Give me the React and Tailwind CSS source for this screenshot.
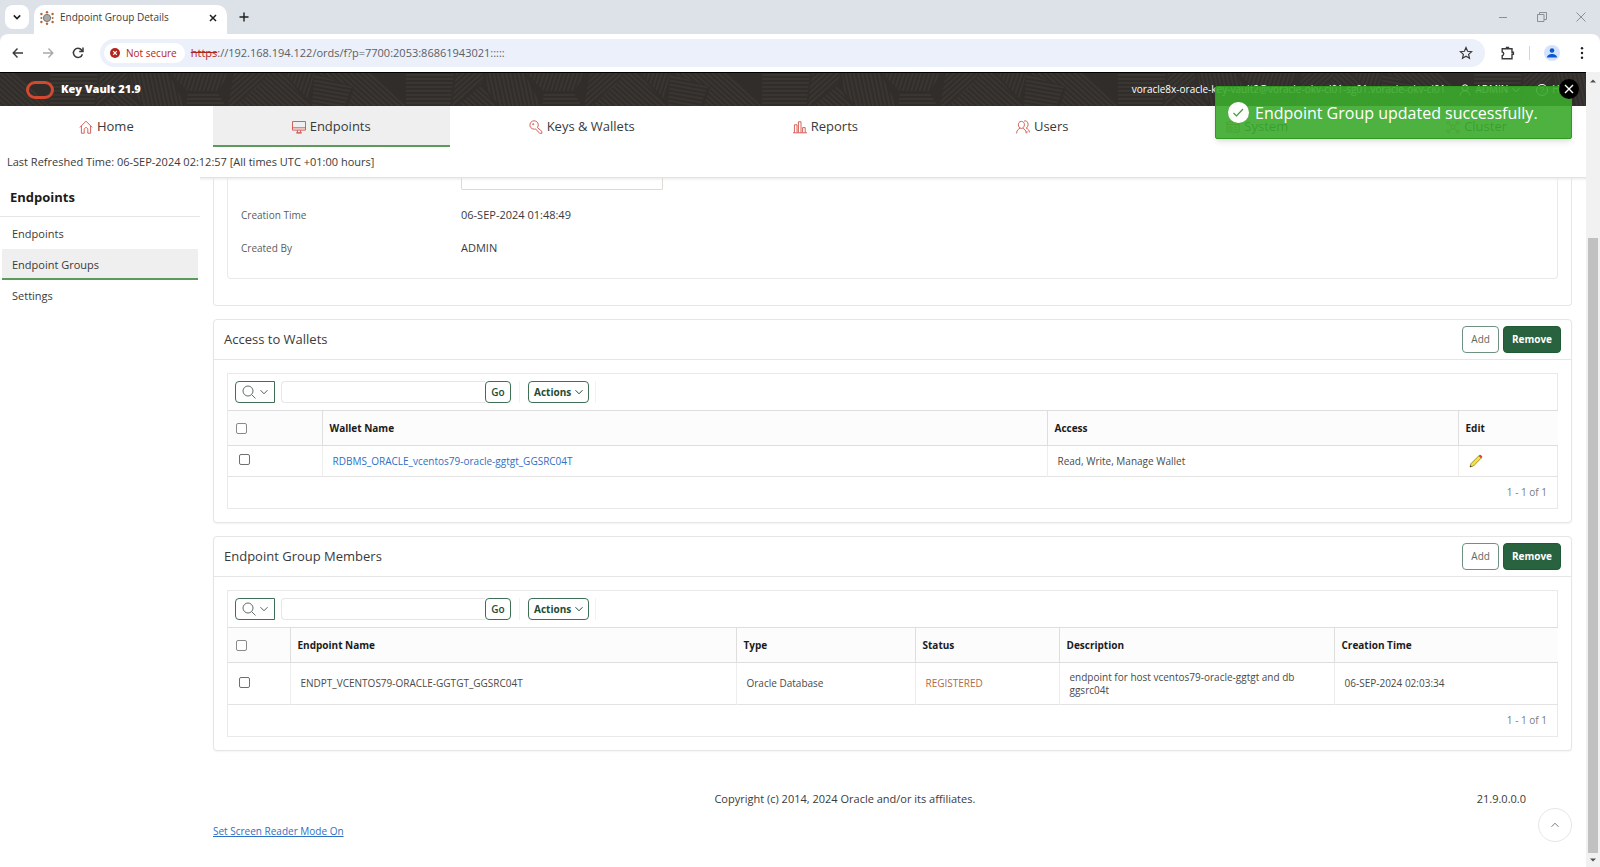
import React, { useState } from "react";

const navItems = [
  { label: "Home", icon: "home" },
  { label: "Endpoints", icon: "monitor" },
  { label: "Keys & Wallets", icon: "key" },
  { label: "Reports", icon: "chart" },
  { label: "Users", icon: "users" },
  { label: "System", icon: "system" },
  { label: "Cluster", icon: "cluster" },
];

const sideItems = ["Endpoints", "Endpoint Groups", "Settings"];

const walletColumns = [
  { label: "Wallet Name", width: "w-[725px]" },
  { label: "Access", width: "w-[411px]" },
  { label: "Edit", width: "w-[100px]" },
];

const memberColumns = [
  { label: "Endpoint Name", width: "w-[446px]" },
  { label: "Type", width: "w-[179px]" },
  { label: "Status", width: "w-[144px]" },
  { label: "Description", width: "w-[275px]" },
  { label: "Creation Time", width: "w-[224px]" },
];

const iconPaths = {
  home: (
    <path d="M.8 7.4 7 1.2l6.2 6.2M2.4 6v7.2h2.8V9.4c0-2.4 3.6-2.4 3.6 0v3.8h2.8V6" />
  ),
  monitor: (
    <path d="M.5 1.5h13v8.6H.5zM.5 7.8h13M5.4 10.1v2.8h3.2v-2.8M4 12.9h6" />
  ),
  key: (
    <>
      <path d="M8.4 7.6A4.2 4.2 0 1 0 5 9.2c.8 0 1.6-.3 1.6-.3l4 4.4h2.200v-2L8.4 7.6z" />
      <circle cx="4.2" cy="4.2" r=".6" />
    </>
  ),
  chart: (
    <path d="M0 12.8h14M1.4 12.6V4.8h2.6v7.8M5.4 12.6V1.8H8v10.8M9.6 12.6V7.6h2.6v5" />
  ),
  users: (
    <path d="M5.4 1.4c4.4 0 3.6 7 0 7s-4.400-7 0-7zM.6 13.400c0-3.400 2-4.400 3.600-5.400M10.200 13.400c0-3.400-2-4.400-3.600-5.400M8 1.200c4.600-1.800 5.200 5.400 2.200 7 2.200 1 3.200 2.200 3.200 4.200M11 11.200v1.600" />
  ),
  system: (
    <path d="M1 2h12v10H1zM1 4.500h12M3 7h3v3H3zM8 7h3M8 9.500h3" />
  ),
  cluster: (
    <>
      <circle cx="7" cy="7" r="2" />
      <circle cx="2.300" cy="2.800" r="1.500" />
      <circle cx="11.700" cy="2.800" r="1.500" />
      <circle cx="2.300" cy="11.400" r="1.500" />
      <circle cx="11.700" cy="11.400" r="1.500" />
      <path d="m3.500 3.800 2 1.800M10.500 3.800l-2 1.800M3.500 10.400l2-1.800M10.500 10.400l-2-1.800" />
    </>
  ),
};

const NavIcon = ({ name }) => (
  <svg
    className="size-3.5 shrink-0"
    viewBox="0 0 14 14"
    fill="none"
    stroke="#cf5148"
    strokeWidth=".9"
    strokeLinejoin="round"
  >
    {iconPaths[name]}
  </svg>
);

const Chevron = ({ className = "size-2" }) => (
  <svg className={className} viewBox="0 0 8 8" fill="none" stroke="currentColor" strokeWidth="1">
    <path d="M.5 2.200 4 5.800l3.500-3.600" />
  </svg>
);

// Hatched bands of the dark header, repeated over its whole width
const HeaderPattern = () => {
  const hatches = [
    { id: "h-steep", angle: -12 },
    { id: "h-lean", angle: 18 },
    { id: "h-diag", angle: 48 },
    { id: "h-back", angle: -48 },
    { id: "h-flat", angle: 90 },
    { id: "h-tilt", angle: -80 },
  ];
  const bands = [
    { fill: "url(#h-steep)", points: "0,0 24,0 42,34 0,34" },
    { fill: "url(#h-lean)", points: "26,0 86,0 74,18 44,18" },
    { fill: "url(#h-flat)", points: "44,20 74,20 82,34 42,34" },
    { fill: "url(#h-diag)", points: "90,0 122,0 116,12 88,34 84,34" },
    { fill: "url(#h-back)", points: "124,0 138,0 168,34 90,34 116,12" },
    { fill: "url(#h-lean)", points: "140,0 170,0 164,26" },
    { fill: "url(#h-tilt)", points: "170,0 208,14 200,34 168,34" },
    { fill: "url(#h-back)", points: "172,0 228,0 262,34 204,34 210,14" },
    { fill: "url(#h-flat)", points: "262,0 310,0 306,34 262,34" },
    { fill: "url(#h-diag)", points: "312,0 340,0 338,10 308,34" },
    { fill: "url(#h-back)", points: "338,12 352,34 312,34" },
    { fill: "url(#h-steep)", points: "342,0 356,0 356,34 344,18" },
  ];
  return (
    <svg className="absolute inset-0 h-full w-full" aria-hidden="true">
      <defs>
        {hatches.map((h) => (
          <pattern
            key={h.id}
            id={h.id}
            width="4"
            height="4"
            patternUnits="userSpaceOnUse"
            patternTransform={`rotate(${h.angle})`}
          >
            <path d="M2 0v4" stroke="#423d39" strokeWidth="1" />
          </pattern>
        ))}
        <pattern id="bands" width="356" height="34" x="144" patternUnits="userSpaceOnUse">
          {bands.map((b, i) => (
            <polygon key={i} points={b.points} fill={b.fill} />
          ))}
        </pattern>
      </defs>
      <rect width="100%" height="100%" fill="url(#bands)" />
    </svg>
  );
};

const BrowserTabs = () => (
  <div className="flex h-[34px] items-end bg-[#dde1e8] text-[#1f1f1f]">
    <button
      aria-label="Search tabs"
      className="mb-[5px] ml-[5px] flex size-6 items-center justify-center rounded-lg bg-white"
    >
      <svg className="size-2" viewBox="0 0 8 8" fill="none" stroke="currentColor" strokeWidth="1.600">
        <path d="M.8 2.400 4 5.600l3.200-3.200" />
      </svg>
    </button>
    <div className="ml-[5px] flex h-[29px] w-[193px] items-center rounded-t-[10px] bg-white pr-1.5 pb-1 pl-1.5">
      <svg className="size-3.5" viewBox="0 0 14 14">
        <circle cx="7" cy="7" r="3.600" fill="#a9a9a9" stroke="#777" />
        <g fill="#b5642f">
          <circle cx="7" cy="1.200" r="1.200" />
          <circle cx="7" cy="12.800" r="1.200" />
          <circle cx="1.400" cy="3" r="1.200" />
          <circle cx="12.600" cy="3" r="1.200" />
          <circle cx="1.400" cy="7" r="1" />
          <circle cx="12.600" cy="7" r="1" />
          <circle cx="1.400" cy="11" r="1.200" />
          <circle cx="12.600" cy="11" r="1.200" />
        </g>
      </svg>
      <span className="ml-1.5 flex-1 text-[10px] text-[#3c3c3c]">Endpoint Group Details</span>
      <button aria-label="Close tab" className="p-1">
        <svg className="size-2" viewBox="0 0 8 8" stroke="currentColor" strokeWidth="1.500">
          <path d="m1 1 6 6M7 1 1 7" />
        </svg>
      </button>
    </div>
    <button aria-label="New tab" className="mb-3 ml-3">
      <svg className="size-2.5" viewBox="0 0 10 10" stroke="currentColor" strokeWidth="1.400">
        <path d="M5 .5v9M.5 5h9" />
      </svg>
    </button>
    <div className="mr-3.5 mb-3 ml-auto flex items-center gap-[29px] text-[#8b8e92]">
      <button aria-label="Minimize">
        <svg className="size-2.5" viewBox="0 0 10 10" stroke="currentColor">
          <path d="M1 5.500h8" />
        </svg>
      </button>
      <button aria-label="Restore">
        <svg className="size-2.5" viewBox="0 0 10 10" fill="none" stroke="currentColor">
          <path d="M.5 2.500h6.500v7H.5zM2.500 2.500v-2h7v7H7" />
        </svg>
      </button>
      <button aria-label="Close">
        <svg className="size-2.5" viewBox="0 0 10 10" stroke="currentColor">
          <path d="m.5.5 9 9M9.500.5l-9 9" />
        </svg>
      </button>
    </div>
  </div>
);

const AddressBar = () => (
  <div className="bg-[#dde1e8]">
    <div className="flex h-[38px] items-center rounded-t-lg bg-white pr-4 pl-3 text-[#3a3a3a]">
      <button aria-label="Back">
        <svg className="size-3" viewBox="0 0 12 12" fill="none" stroke="currentColor" strokeWidth="1.400">
          <path d="M11 6H1.500M5.500 1.500 1.200 6l4.300 4.500" />
        </svg>
      </button>
      <button aria-label="Forward" className="ml-[18px] text-[#a9a9a9]">
        <svg className="size-3" viewBox="0 0 12 12" fill="none" stroke="currentColor" strokeWidth="1.400">
          <path d="M1 6h9.500M6.500 1.500 10.800 6l-4.300 4.500" />
        </svg>
      </button>
      <button aria-label="Reload" className="ml-[18px]">
        <svg className="size-3" viewBox="0 0 12 12" fill="none" stroke="currentColor" strokeWidth="1.500">
          <path d="M10.400 7.200A4.600 4.600 0 1 1 9.600 3L11 4.400M11 .6v3.800H7.200" />
        </svg>
      </button>
      <div className="ml-4 flex h-7 flex-1 items-center rounded-full bg-[#ebf0fa] pr-3 pl-1">
        <button className="flex h-5 items-center gap-1.5 rounded-full bg-white pr-2 pl-1.5 text-[10px] text-[#b3261e]">
          <svg className="size-2.5" viewBox="0 0 10 10">
            <circle cx="5" cy="5" r="5" fill="#b3261e" />
            <path d="m3.200 3.200 3.600 3.600M6.800 3.200 3.200 6.800" stroke="#fff" strokeWidth="1.200" />
          </svg>
          Not secure
        </button>
        <p className="ml-1.5 flex-1 text-[11px] text-[#5b5f66]">
          <span className="text-[#b3261e] line-through">https</span>
          ://192.168.194.122/ords/f?p=7700:2053:86861943021:::::
        </p>
        <button aria-label="Bookmark">
          <svg className="size-3.5" viewBox="0 0 14 14" fill="none" stroke="currentColor" strokeWidth="1.200">
            <path d="m7 1.600 1.600 3.700 4 .4-3 2.700.9 3.900L7 10.200l-3.500 2.100.9-3.900-3-2.700 4-.4z" />
          </svg>
        </button>
      </div>
      <button aria-label="Extensions" className="ml-4">
        <svg className="size-3.5" viewBox="0 0 14 14" fill="none" stroke="currentColor" strokeWidth="1.400">
          <path d="M1.200 2.800H11v3.500h1.400v2H11v4.500H1.200V9.600c2-.4 2-3.200 0-3.600z" />
          <path d="M5.500 2V1.400h2V2" />
        </svg>
      </button>
      <span className="mx-3.5 h-3.5 w-px bg-[#c3d7f7]" />
      <button aria-label="Profile" className="flex size-4 items-center justify-center rounded-full bg-[#d3e3fd]">
        <svg className="size-2.5" viewBox="0 0 10 10" fill="#0b57d0">
          <circle cx="5" cy="2.500" r="2.300" />
          <path d="M0 9.500C0 4.800 10 4.800 10 9.500z" />
        </svg>
      </button>
      <button aria-label="Menu" className="ml-5">
        <svg className="h-3 w-1" viewBox="0 0 4 12" fill="#1f1f1f">
          <circle cx="2" cy="1.300" r="1.200" />
          <circle cx="2" cy="6" r="1.200" />
          <circle cx="2" cy="10.700" r="1.200" />
        </svg>
      </button>
    </div>
  </div>
);

const Region = ({ title, children }) => (
  <section className="mb-[13px] rounded-sm border border-[#e6e6e6] bg-white shadow-xs">
    <div className="flex h-10 items-center gap-1 border-b border-[#e6e6e6] px-2.5">
      <h2 className="flex-1 text-[13px] text-[#3a3a3a]">{title}</h2>
      <button className="h-[27px] rounded-sm border border-[#6f9180] bg-white px-2 text-[10px] text-[#5b6a62]">
        Add
      </button>
      <button className="h-[27px] rounded-sm border border-[#1f5a37] bg-[#28623f] px-2 text-[10px] font-bold text-white">
        Remove
      </button>
    </div>
    <div className="m-[13px] border border-[#e9e9e9]">{children}</div>
  </section>
);

const ReportToolbar = ({ name }) => (
  <div className="flex h-9 items-center pl-[7px]">
    <button
      aria-label="Select columns to search"
      className="flex h-[22px] w-10 items-center justify-center gap-1 rounded-l-sm border border-[#3f6f54] text-[#4d5f55]"
    >
      <svg className="size-3.5" viewBox="0 0 14 14" fill="none" stroke="currentColor" strokeWidth=".9">
        <circle cx="6" cy="6" r="5" />
        <path d="m9.800 9.800 3.700 3.700" />
      </svg>
      <Chevron />
    </button>
    <input
      type="text"
      aria-label={`Search ${name}`}
      className="ml-1.5 h-[22px] w-[204px] rounded-l-sm border border-r-0 border-[#e6e6e6] px-2 text-[11px] outline-none"
    />
    <button className="h-[22px] w-[26px] rounded-sm border border-[#3f6f54] text-[10px] font-semibold text-[#1e4d33]">
      Go
    </button>
    <span className="mx-2 h-[22px] w-px bg-[#f2f2f2]" />
    <button className="flex h-[22px] items-center gap-1 rounded-sm border border-[#3f6f54] px-[5px] text-[10px] font-bold text-[#1e4d33]">
      Actions <Chevron />
    </button>
    <span className="ml-1.5 h-[22px] w-px bg-[#f2f2f2]" />
  </div>
);

const Report = ({ name, columns, checkWidth, children }) => (
  <>
    <ReportToolbar name={name} />
    <table className="w-full table-fixed border-collapse text-left">
      <thead>
        <tr className="h-[35px] border-y border-[#dedede] bg-[#fcfcfc]">
          <th className={`${checkWidth} pl-2`}>
            <input
              type="checkbox"
              aria-label={`Select all ${name}`}
              className="block size-[11px] appearance-none rounded-xs border border-[#8a8a8a] bg-white"
            />
          </th>
          {columns.map((col) => (
            <th
              key={col.label}
              className={`${col.width} border-l border-[#dedede] pl-[7px] text-[10px] font-bold text-[#1b1b1b]`}
            >
              {col.label}
            </th>
          ))}
        </tr>
      </thead>
      <tbody>{children}</tbody>
    </table>
    <div className="flex h-[31px] items-center justify-end pr-2.5 text-[10px] text-[#7a7a7a]">1 - 1 of 1</div>
  </>
);

const RowCheck = ({ label }) => (
  <td className="pb-[3px] pl-[11px]">
    <input
      type="checkbox"
      aria-label={label}
      className="block size-[11px] appearance-none rounded-xs border border-[#6f6f6f] bg-white"
    />
  </td>
);

const Cell = ({ className = "text-[#4a4a4a]", children }) => (
  <td className={`border-l border-[#ededed] px-2.5 text-[10px] ${className}`}>{children}</td>
);

const Toast = ({ onClose }) => (
  <div
    role="alert"
    className="absolute top-3.5 right-3.5 flex h-[53px] w-[357px] items-center rounded-xs border border-[#2f9a20] bg-[#3baa2c]/90 pl-3 text-white shadow-md"
  >
    <svg className="size-[21px]" viewBox="0 0 21 21" fill="none">
      <circle cx="10.500" cy="10.500" r="10.500" fill="#fff" />
      <path d="m5.500 11 3 3 6.500-7" stroke="#3f9a33" strokeWidth="1.200" />
    </svg>
    <span className="ml-1.5 text-base">Endpoint Group updated successfully.</span>
    <button
      aria-label="Dismiss"
      onClick={onClose}
      className="absolute -top-2 -right-2 flex size-5 items-center justify-center rounded-full bg-black"
    >
      <svg className="size-2.5" viewBox="0 0 10 10" stroke="#fff" strokeWidth="1.400">
        <path d="m1 1 8 8M9 1 1 9" />
      </svg>
    </button>
  </div>
);

const App = () => {
  const [showToast, setShowToast] = useState(true);

  return (
    <div className="flex min-h-screen flex-col bg-white font-['Open_Sans','Noto_Sans',sans-serif] text-[#3a3a3a]">
      <BrowserTabs />
      <AddressBar />
      <div className="flex flex-1">
        <div className="relative flex min-w-0 flex-1 flex-col">
          <header className="relative flex h-[34px] items-center border-t border-black bg-[#312d2a] pr-3 pl-[26px] text-white">
            <HeaderPattern />
            <svg className="relative h-[18px] w-7" viewBox="0 0 28 18" fill="none" stroke="#d1492f" strokeWidth="3">
              <rect x="1.500" y="1.500" width="25" height="15" rx="7.500" />
            </svg>
            <h1 className="relative ml-[7px] flex-1 text-[11px] font-extrabold">Key Vault 21.9</h1>
            <div className="relative flex items-center text-[10px]">
              <span>voracle8x-oracle-key-vault2@voracle-okv-cl01-sg01.voracle-okv-cl01</span>
              <button className="ml-3.5 flex items-center gap-1">
                <svg className="size-3" viewBox="0 0 12 12" fill="none" stroke="currentColor">
                  <circle cx="6" cy="3.800" r="3" />
                  <path d="M1 11.500c.5-3 2.500-4.700 5-4.700s4.500 1.700 5 4.700" />
                </svg>
                ADMIN
                <Chevron />
              </button>
              <a href="#help" className="ml-4 flex items-center gap-1">
                <svg className="size-3" viewBox="0 0 12 12" fill="none" stroke="currentColor">
                  <circle cx="6" cy="6" r="5.500" />
                  <path d="M4.300 4.800c0-2.400 3.500-2.200 3.400 0C7.600 6 6 6 6 7.500M6 8.500v1" />
                </svg>
                Help
              </a>
            </div>
          </header>
          <nav className="flex">
            {navItems.map((item) => (
              <a
                key={item.label}
                href={"#" + item.label}
                className={`flex h-[41px] flex-auto items-center justify-center gap-1 border-b-2 pt-0.5 text-[13px] ${
                  item.label === "Endpoints" ? "border-[#5c9a5b] bg-[#efefef]" : "border-transparent"
                }`}
              >
                <NavIcon name={item.icon} />
                {item.label}
              </a>
            ))}
          </nav>
          <p className="flex h-[30px] items-center pl-[7px] text-[11px]">
            Last Refreshed Time: 06-SEP-2024 02:12:57 [All times UTC +01:00 hours]
          </p>
          <div className="flex flex-1">
            <aside className="w-[200px] shrink-0">
              <h2 className="flex h-10 items-center border-b border-[#e6e6e6] pt-0.5 pl-2.5 text-[13px] font-bold text-[#1b1b1b]">
                Endpoints
              </h2>
              <ul className="px-0.5 pt-px">
                {sideItems.map((item) => (
                  <li key={item}>
                    <a
                      href={"#" + item}
                      className={`flex h-[31px] items-center border-b-2 pt-1 pl-2.5 text-[11px] ${
                        item === "Endpoint Groups" ? "border-[#5c9a5b] bg-[#efefef]" : "border-transparent"
                      }`}
                    >
                      {item}
                    </a>
                  </li>
                ))}
              </ul>
            </aside>
            <main className="flex min-w-0 flex-1 flex-col border-t border-[#e3e3e3] pr-3.5 pl-[13px] shadow-[inset_0_4px_3px_-3px_#e6e6e6]">
              <section className="mb-[13px] rounded-b-sm border border-t-0 border-[#e6e6e6] px-[13px] pb-[26px]">
                <div className="rounded-b-sm border border-t-0 border-[#e9e9e9] px-[13px] pb-[13px]">
                  <textarea
                    aria-label="Description"
                    className="ml-[220px] block h-3 w-[202px] resize-none rounded-b-xs border border-t-0 border-[#dfd9cf] outline-none"
                  />
                  <dl className="grid grid-cols-[220px_1fr] items-center pt-[9px]">
                    <dt className="text-[10px] text-[#5c5c5c]">Creation Time</dt>
                    <dd className="flex h-[33px] items-center text-[11px]">06-SEP-2024 01:48:49</dd>
                    <dt className="text-[10px] text-[#5c5c5c]">Created By</dt>
                    <dd className="flex h-[33px] items-center text-[11px]">ADMIN</dd>
                  </dl>
                </div>
              </section>

              <Region title="Access to Wallets">
                <Report name="wallets" columns={walletColumns} checkWidth="w-[94px]">
                  <tr className="h-[31px] border-b border-[#e3e3e3]">
                    <RowCheck label="Select wallet" />
                    <Cell>
                      <a href="#wallet" className="text-[#2f6fc4]">
                        RDBMS_ORACLE_vcentos79-oracle-ggtgt_GGSRC04T
                      </a>
                    </Cell>
                    <Cell>Read, Write, Manage Wallet</Cell>
                    <Cell>
                      <button aria-label="Edit" className="block">
                        <svg className="size-3.5" viewBox="0 0 14 14">
                          <path d="M1 13 2 9.600 9.800 1.800l2.400 2.400L4.400 12z" fill="#f4e04a" stroke="#8f7d1d" strokeWidth=".8" />
                          <path d="m9.800 1.800 1-1c.6-.5 2.900 1.700 2.400 2.400l-1 1z" fill="#e8402c" />
                          <path d="m1 13 .5-1.800 1.300 1.300z" fill="#333" />
                        </svg>
                      </button>
                    </Cell>
                  </tr>
                </Report>
              </Region>

              <Region title="Endpoint Group Members">
                <Report name="members" columns={memberColumns} checkWidth="w-[62px]">
                  <tr className="h-[42px] border-b border-[#e3e3e3]">
                    <RowCheck label="Select member" />
                    <Cell>ENDPT_VCENTOS79-ORACLE-GGTGT_GGSRC04T</Cell>
                    <Cell>Oracle Database</Cell>
                    <Cell className="text-[#b06a48]">REGISTERED</Cell>
                    <Cell className="leading-[13px] text-[#4a4a4a]">
                      endpoint for host vcentos79-oracle-ggtgt and db ggsrc04t
                    </Cell>
                    <Cell>06-SEP-2024 02:03:34</Cell>
                  </tr>
                </Report>
              </Region>

              <footer className="pt-[26px] text-[11px]">
                <div className="flex h-[18px] items-center pr-[46px]">
                  <span className="flex-1" />
                  <span>Copyright (c) 2014, 2024 Oracle and/or its affiliates.</span>
                  <span className="flex-1" />
                  <span>21.9.0.0.0</span>
                </div>
                <div className="flex items-center justify-between">
                  <a href="#reader" className="pt-3 text-[10px] text-[#2f6fc4] underline">
                    Set Screen Reader Mode On
                  </a>
                  <button
                    aria-label="Start of page"
                    className="flex size-[34px] items-center justify-center rounded-full border border-[#e6e6e6] text-[#7a7a7a]"
                  >
                    <Chevron className="size-2 rotate-180" />
                  </button>
                </div>
              </footer>
            </main>
          </div>
          {showToast && <Toast onClose={() => setShowToast(false)} />}
        </div>
        <div className="flex w-3.5 flex-col items-center bg-[#f1f1f1]" aria-hidden="true">
          <svg className="mt-1.5 size-1.5" viewBox="0 0 6 6" fill="#505050">
            <path d="M0 4.500h6L3 1.500z" />
          </svg>
          <div className="mt-[154px] w-2.5 flex-1 bg-[#c1c1c1]" />
          <svg className="my-1 size-1.5" viewBox="0 0 6 6" fill="#505050">
            <path d="M0 1.500h6L3 4.500z" />
          </svg>
        </div>
      </div>
    </div>
  );
};

export default App;
